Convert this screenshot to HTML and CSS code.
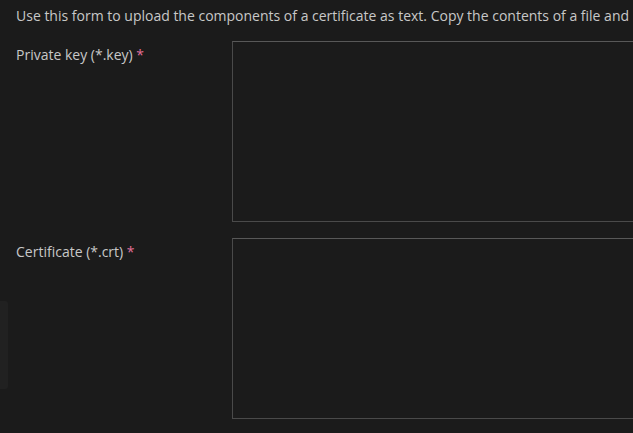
FILE: index.html
```
<!DOCTYPE html>
<html>
<head>
<meta charset="utf-8">
<link rel="stylesheet" href="styles.css">
</head>
<body>
<div class="page">
  <p class="intro">Use this form to upload the components of a certificate as text. Copy the contents of a file and</p>
  <div class="row">
    <label class="label">Private key (*.key) <span class="req">*</span></label>
    <textarea class="field"></textarea>
  </div>
  <div class="row">
    <label class="label">Certificate (*.crt) <span class="req">*</span></label>
    <textarea class="field"></textarea>
  </div>
</div>
<div class="sidetab"><span class="dot"></span><span class="dot"></span></div>
</body>
</html>
```
FILE: styles.css
```
html, body {
  margin: 0;
  padding: 0;
  background: #1b1b1b;
  overflow: hidden;
  width: 633px;
  height: 433px;
}
.page {
  padding: 0 0 0 16px;
  font-family: "Open Sans", sans-serif;
  font-size: 14px;
  color: #c8c8c8;
  width: 1000px;
}
.intro {
  margin: 0;
  padding-top: 6px;
  line-height: 20px;
  height: 35px;
  white-space: nowrap;
}
.row {
  display: flex;
  margin-bottom: 16px;
}
.label {
  width: 216px;
  flex: none;
  padding-top: 4px;
  line-height: 20px;
}
.req {
  color: #e2709a;
}
.field {
  width: 600px;
  height: 181px;
  box-sizing: border-box;
  background: #1b1b1b;
  border: 1px solid #4a4a4a;
  border-top-color: #585858;
  margin: 0;
  padding: 0;
  resize: none;
}
.sidetab {
  position: absolute;
  left: -6px;
  top: 301px;
  width: 14px;
  height: 88px;
  background: #212121;
  border-radius: 3px;
  display: flex;
  flex-direction: column;
  align-items: flex-end;
  justify-content: center;
  gap: 4px;
}
.dot {
  display: block;
  width: 1px;
  height: 2px;
  background: #999;
  margin-right: 14px;
}
```
